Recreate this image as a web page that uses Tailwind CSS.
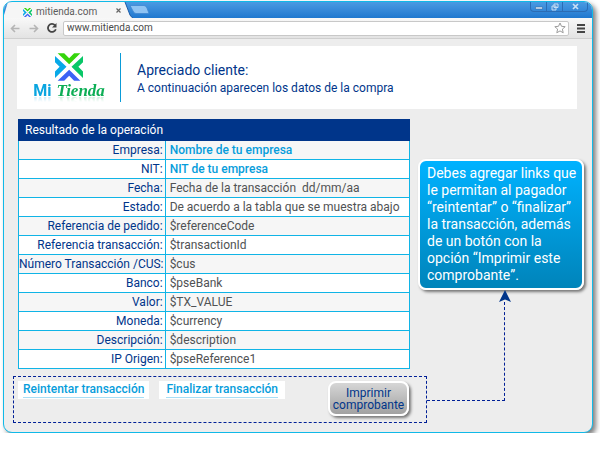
<!DOCTYPE html>
<html lang="es">
<head>
<meta charset="utf-8">
<meta name="viewport" content="width=device-width, initial-scale=1">
<title>mitienda.com</title>
<script src="https://cdn.jsdelivr.net/npm/@tailwindcss/browser@4"></script>
</head>
<body class="bg-white font-['Roboto',sans-serif] text-[12px] leading-4 text-[#505254]">
<div class="mt-px mr-[7px] ml-[3px] overflow-hidden rounded-[9px] border border-[#10b9e8] bg-[#ededed] shadow-[3px_3px_5px_#00000080]">

  <!-- Tab strip -->
  <header class="flex h-4 items-start bg-linear-to-b from-[#4a9ae2] to-[#1f78cf]">
    <svg class="h-4 w-[4px] shrink-0" viewBox="0 0 4 16" aria-hidden="true"><path d="M4 0L0 13V16H4Z" fill="#f6f6f6"/></svg>
    <div class="flex h-4 w-[115px] items-center bg-[#f6f6f6] pt-1 pl-[15px] text-[10px] leading-3 text-[#5c5c5c]">
      <svg class="mr-1 size-[9px]" viewBox="0 0 85 83" aria-hidden="true"><path d="M8 0H28L43 15L58 0H77L43 33Z" fill="#35d50c"/><path d="M0 8L35 41L0 75V55L14 41L0 27Z" fill="#08a9e8"/><path d="M85 8L50 41L85 75V55L71 41L85 27Z" fill="#09c768"/><path d="M8 83H28L43 68L58 83H77L43 50Z" fill="#3c63f5"/></svg>
      <span>mitienda.com</span>
      <button class="mr-[2px] mb-1 ml-auto" aria-label="Cerrar pestaña"><svg class="size-[5px]" viewBox="0 0 5 5"><path d="M.5 .5L4.500 4.500M4.500 .5L.5 4.500" stroke="#666" stroke-width="1.200"/></svg></button>
    </div>
    <svg class="h-4 w-[30px] shrink-0" viewBox="0 0 30 16" aria-hidden="true"><path d="M0 0H2L7 13Q8 15 10 16H0Z" fill="#f6f6f6"/><path d="M2 0L7 13Q8 15 10 16" fill="none" stroke="#1c5ca8"/><path d="M7 3.500H21Q23 3.500 24 6L26 11.500H13Q11 11.500 10 9Z" fill="#8fc3f3" stroke="#3f87d0" stroke-width=".8"/></svg>
    <div class="ml-auto mr-1 flex h-[10px] rounded-b-sm border border-t-0 border-[#2b6cb4]">
      <button class="flex w-[15px] items-center justify-center" aria-label="Minimizar"><svg class="h-2 w-2" viewBox="0 0 8 8"><path d="M.5 4H7.500V6H.5Z" fill="#e8f2fc" stroke="#35689e" stroke-width=".6"/></svg></button>
      <button class="flex w-[17px] items-center justify-center border-x border-[#2b6cb4]" aria-label="Restaurar"><svg class="size-2" viewBox="0 0 8 8"><path d="M3 1H7V4.500H3ZM1 3H5V7H1Z" fill="#4d91d6" stroke="#c3dcf4"/></svg></button>
      <button class="flex w-[24px] items-center justify-center" aria-label="Cerrar"><svg class="size-[7px]" viewBox="0 0 7 7"><path d="M1 1L6 6M6 1L1 6" stroke="#c9e0f6" stroke-width="1.700"/></svg></button>
    </div>
  </header>

  <!-- Toolbar -->
  <nav class="flex h-[21px] items-center border-b border-[#cfcfcf] bg-linear-to-b from-[#f8f8f8] to-[#e3e3e3] pr-[7px] pl-[6px]">
    <button class="mr-[9px]" aria-label="Atrás"><svg class="h-[9px] w-[10px]" viewBox="0 0 10 9" fill="none" stroke="#b5b5b5" stroke-width="1.600"><path d="M9.500 4.500H1.500M5 1L1.500 4.500L5 8"/></svg></button>
    <button class="mr-[8px]" aria-label="Adelante"><svg class="h-[9px] w-[10px]" viewBox="0 0 10 9" fill="none" stroke="#b5b5b5" stroke-width="1.600"><path d="M.5 4.500H8.500M5 1L8.500 4.500L5 8"/></svg></button>
    <button class="mr-[6px]" aria-label="Recargar"><svg class="size-[10px]" viewBox="0 0 10 10"><path d="M8 2.300A4 4 0 1 0 8.800 6.200" fill="none" stroke="#444" stroke-width="1.800"/><path d="M9.500 0V4.500H5Z" fill="#444"/></svg></button>
    <div class="flex h-[15px] flex-1 items-center rounded-xs border border-[#c8c8c8] bg-white pr-[2px] pl-[3px]">
      <input class="min-w-0 flex-1 text-[10px] leading-3 text-[#4a4a4a] outline-none" type="text" aria-label="Dirección" value="www.mitienda.com">
      <button aria-label="Marcar página"><svg class="size-3" viewBox="0 0 12 12"><path d="M6 1L7.500 4.300L11.200 4.700L8.400 7.100L9.200 10.800L6 8.900L2.800 10.800L3.600 7.100L.8 4.700L4.500 4.300Z" fill="#fff" stroke="#9c9c9c"/></svg></button>
    </div>
    <button class="ml-2" aria-label="Menú"><svg class="h-[9px] w-2" viewBox="0 0 8 9"><path d="M0 1H8M0 4.500H8M0 8H8" stroke="#444" stroke-width="1.800"/></svg></button>
  </nav>

  <main class="pt-[7px] pb-[9px]">
    <section class="mr-[15px] ml-[13px] flex h-[63px] items-center bg-white pl-[15px] text-[#00358a]">
      <div class="flex h-[52px] w-[74px] flex-col items-center">
        <svg class="mt-px h-[28px] w-[28px] shrink-0" viewBox="0 0 85 83" aria-hidden="true"><path d="M8 0H28L43 15L58 0H77L43 33Z" fill="#35d50c"/><path d="M0 8L35 41L0 75V55L14 41L0 27Z" fill="#08a9e8"/><path d="M85 8L50 41L85 75V55L71 41L85 27Z" fill="#09c768"/><path d="M8 83H28L43 68L58 83H77L43 50Z" fill="#3c63f5"/></svg>
        <p class="mt-[2px] flex items-baseline gap-[5px] leading-4 whitespace-nowrap [-webkit-box-reflect:below_-5px_linear-gradient(transparent_50%,#0005)]"><span class="text-[16px] font-bold text-[#0aa5e0]">Mi</span><span class="font-['Liberation_Serif',serif] text-[17px] font-bold text-[#0cae55] italic">Tienda</span></p>
      </div>
      <div class="ml-[14px] h-[49px] border-l border-[#0a9bd8]"></div>
      <div class="ml-4">
        <h1 class="text-[14px] leading-5">Apreciado cliente:</h1>
        <p>A continuación aparecen los datos de la compra</p>
      </div>
    </section>

    <div class="mt-[10px] ml-[9px] grid grid-cols-[minmax(0,414fr)_minmax(0,165fr)]">
      <div>
        <div class="mr-[17px] ml-[5px]">
          <table class="w-full table-fixed border-collapse border border-[#10b4e6]">
            <colgroup><col class="w-[37.5%]"><col></colgroup>
            <thead><tr class="h-[21px]"><th colspan="2" class="border border-[#00358a] bg-[#00358a] px-[6px] text-left font-normal text-white">Resultado de la operación</th></tr></thead>
            <tbody class="[&_td]:border [&_td]:border-[#10b4e6] [&_td]:pl-1 [&_td]:leading-[18px] [&_th]:border [&_th]:border-[#10b4e6] [&_th]:pr-[2px] [&_th]:text-right [&_th]:leading-[18px] [&_th]:font-normal [&_th]:whitespace-nowrap [&_th]:text-[#00358a] [&_tr]:bg-white [&_tr:nth-child(odd)]:bg-[#f6f6f6]">
              <tr><th scope="row">Empresa:</th><td class="font-medium text-[#079ddb]">Nombre de tu empresa</td></tr>
              <tr><th scope="row">NIT:</th><td class="font-medium text-[#079ddb]">NIT de tu empresa</td></tr>
              <tr><th scope="row">Fecha:</th><td>Fecha de la transacción&nbsp; dd/mm/aa</td></tr>
              <tr><th scope="row">Estado:</th><td>De acuerdo a la tabla que se muestra abajo</td></tr>
              <tr><th scope="row">Referencia de pedido:</th><td>$referenceCode</td></tr>
              <tr><th scope="row">Referencia transacción:</th><td>$transactionId</td></tr>
              <tr><th scope="row">Número Transacción /CUS:</th><td>$cus</td></tr>
              <tr><th scope="row">Banco:</th><td>$pseBank</td></tr>
              <tr><th scope="row">Valor:</th><td>$TX_VALUE</td></tr>
              <tr><th scope="row">Moneda:</th><td>$currency</td></tr>
              <tr><th scope="row">Descripción:</th><td>$description</td></tr>
              <tr><th scope="row">IP Origen:</th><td>$pseReference1</td></tr>
            </tbody>
          </table>
        </div>
        <div class="mt-[7px] flex h-[47px] items-start border border-dashed border-[#001f96] pt-1 pr-[17px] pl-1 font-medium text-[#079ddb]">
          <div class="mr-[10px] h-[18px] bg-white px-[5px] pt-px"><a href="#" class="block border-b border-[#a8def5] leading-[15px]">Reintentar transacción</a></div>
          <div class="h-[18px] bg-white px-[7px] pt-px"><a href="#" class="block border-b border-[#a8def5] leading-[15px]">Finalizar transacción</a></div>
          <button class="ml-auto h-[35px] w-[81px] rounded-lg border-2 border-white bg-linear-to-b from-[#d6d6d6] to-[#a2a2a2] text-center leading-3 font-normal text-[#00358a] shadow-[2px_2px_3px_#00000080]">Imprimir comprobante</button>
        </div>
      </div>

      <aside class="flex flex-col pt-[40px]">
        <p class="mr-[8px] -ml-[9px] rounded-lg border-2 border-white bg-linear-to-b from-[#00b2ff] to-[#0084ba] pt-[4px] pb-[4px] pl-[7px] text-[14px] leading-[17px] whitespace-nowrap text-white shadow-[2px_2px_3px_#00000080]">Debes agregar links que<br>le permitan al pagador<br>“reintentar” o “finalizar”<br>la transacción, además<br>de un botón con la<br>opción “Imprimir este<br>comprobante”.</p>
        <!-- Connector from the action bar to the note -->
        <div class="mb-[22px] flex w-[47%] flex-1 flex-col">
          <svg class="-mr-[6px] h-3 w-3 self-end" viewBox="0 0 12 12" aria-hidden="true"><path d="M6 0L12 12L6 9.500L0 12Z" fill="#00358a"/></svg>
          <div class="flex-1 border-r border-b border-dashed border-[#001f96]"></div>
        </div>
      </aside>
    </div>
  </main>
</div>
</body>
</html>
